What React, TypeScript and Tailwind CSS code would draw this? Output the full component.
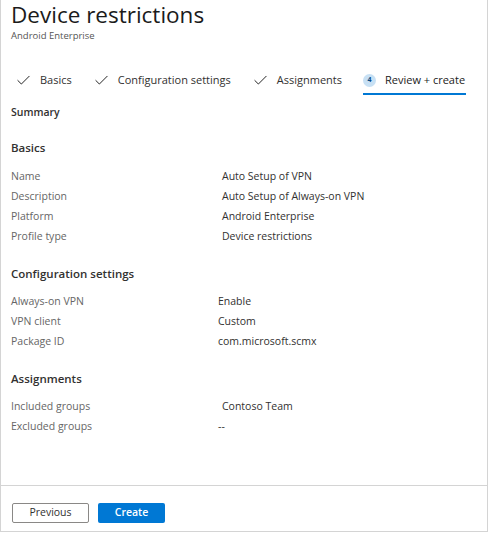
import { Check } from 'lucide-react'

const font = { fontFamily: '"Open Sans", "Noto Sans", sans-serif' }

type Row = { label: string; value: string; indent?: string }

const sections: { title: string; rows: Row[]; top: string; gap: string }[] = [
  {
    title: 'Basics',
    top: 'mt-[20px]',
    gap: 'mt-[10px]',
    rows: [
      { label: 'Name', value: 'Auto Setup of VPN' },
      { label: 'Description', value: 'Auto Setup of Always-on VPN' },
      { label: 'Platform', value: 'Android Enterprise' },
      { label: 'Profile type', value: 'Device restrictions' },
    ],
  },
  {
    title: 'Configuration settings',
    top: 'mt-[20px]',
    gap: 'mt-[9px]',
    rows: [
      { label: 'Always-on VPN', value: 'Enable', indent: 'pl-[207px]' },
      { label: 'VPN client', value: 'Custom', indent: 'pl-[207px]' },
      { label: 'Package ID', value: 'com.microsoft.scmx', indent: 'pl-[207px]' },
    ],
  },
  {
    title: 'Assignments',
    top: 'mt-[20px]',
    gap: 'mt-[9px]',
    rows: [
      { label: 'Included groups', value: 'Contoso Team' },
      { label: 'Excluded groups', value: '--', indent: 'pl-[207px]' },
    ],
  },
]

function Step({ label }: { label: string }) {
  return (
    <div className="flex items-center gap-[8px] whitespace-nowrap">
      <Check size={17} strokeWidth={1.4} className="shrink-0 text-[#222]" />
      <span className="text-[11px] text-[#323130]">{label}</span>
    </div>
  )
}

export default function App() {
  return (
    <div className="h-[539px] w-[493px] bg-white" style={font}>
      <div className="flex h-[532px] w-[488px] flex-col border-x border-b border-[#d4d4d4]">
        <div className="flex-1 px-[10px]">
          <h1 className="text-[22.5px] leading-[29px] text-[#1b1b1b]">Device restrictions</h1>
          <p className="mt-[1px] text-[9.5px] leading-[12px] text-[#555]">Android Enterprise</p>

          <div className="mt-[24px] flex items-center whitespace-nowrap pl-[4px]">
            <div className="flex gap-[21px]">
              <Step label="Basics" />
              <Step label="Configuration settings" />
              <Step label="Assignments" />
            </div>
            <div className="ml-[21px] flex items-center gap-[9px] border-b-2 border-[#0078d4] pb-[4px] pt-[6px] pr-[1px]">
              <span className="flex h-[13px] w-[13px] shrink-0 items-center justify-center rounded-full bg-[#c7e0f4] text-[7px] font-bold text-[#0b4a85]">
                4
              </span>
              <span className="text-[11px] text-[#1b1b1b]">Review + create</span>
            </div>
          </div>

          <h2 className="mt-[10px] text-[10.5px] font-semibold text-[#323130]">Summary</h2>

          {sections.map((s) => (
            <section key={s.title} className={s.top}>
              <h3 className="text-[11.5px] font-semibold leading-[16px] text-[#323130]">{s.title}</h3>
              <div className={`${s.gap} flex flex-col`}>
                {s.rows.map((r) => (
                  <div key={r.label} className="flex h-[20px] items-center text-[10.5px] leading-[14px]">
                    <span className="w-0 whitespace-nowrap text-[#666]">{r.label}</span>
                    <span className={`${r.indent ?? 'pl-[211px]'} whitespace-nowrap text-[#323130]`}>
                      {r.value}
                    </span>
                  </div>
                ))}
              </div>
            </section>
          ))}
        </div>

        <div className="flex h-[46px] items-center gap-[9px] border-t border-[#d4d4d4] px-[11px] pt-[8px]">
          <button className="h-[20px] w-[77px] rounded-[2px] border border-[#8a8886] bg-white text-[10.5px] text-[#323130]">
            Previous
          </button>
          <button className="h-[20px] w-[67px] rounded-[2px] bg-[#0078d4] text-[10.5px] font-semibold text-white">
            Create
          </button>
        </div>
      </div>
    </div>
  )
}
